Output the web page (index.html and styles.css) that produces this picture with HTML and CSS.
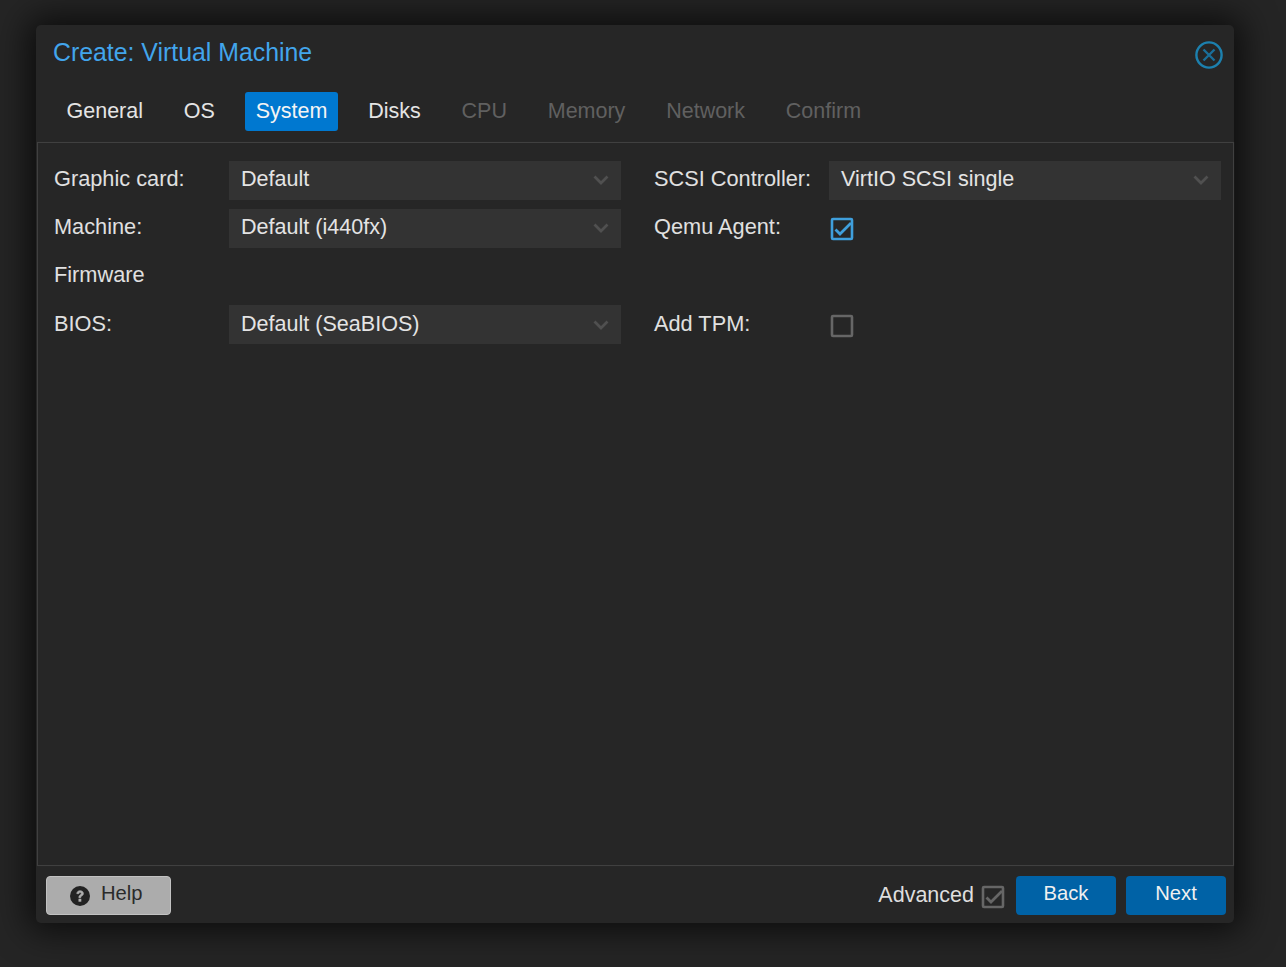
FILE: index.html
```html
<!DOCTYPE html>
<html lang="en">
<head>
<meta charset="utf-8">
<title>Create: Virtual Machine</title>
<link rel="stylesheet" href="styles.css">
</head>
<body>
<div class="window">
  <div class="title-row">
    <div class="title">Create: Virtual Machine</div>
    <svg class="close" viewBox="0 0 28 28" width="28" height="28"><circle cx="14" cy="14" r="12.6" fill="none" stroke="#1c80ae" stroke-width="2.400"/><path d="M8.500 8.500 19.500 19.500M19.500 8.500 8.500 19.500" stroke="#1a6f9a" stroke-width="2.400" fill="none"/></svg>
  </div>
  <div class="tabs">
    <div class="tab">General</div>
    <div class="tab">OS</div>
    <div class="tab active">System</div>
    <div class="tab">Disks</div>
    <div class="tab off">CPU</div>
    <div class="tab off">Memory</div>
    <div class="tab off">Network</div>
    <div class="tab off">Confirm</div>
  </div>
  <div class="body">
    <div class="form">
      <div class="col">
        <div class="row"><label class="lbl">Graphic card:</label><div class="select"><span>Default</span><svg class="chev" viewBox="0 0 16 10" width="16" height="10"><path d="M1.500 1.500 8 8l6.500-6.500" fill="none" stroke="#505050" stroke-width="2.800"/></svg></div></div>
        <div class="row"><label class="lbl">Machine:</label><div class="select"><span>Default (i440fx)</span><svg class="chev" viewBox="0 0 16 10" width="16" height="10"><path d="M1.500 1.500 8 8l6.500-6.500" fill="none" stroke="#505050" stroke-width="2.800"/></svg></div></div>
        <div class="row"><label class="lbl">Firmware</label></div>
        <div class="row"><label class="lbl">BIOS:</label><div class="select"><span>Default (SeaBIOS)</span><svg class="chev" viewBox="0 0 16 10" width="16" height="10"><path d="M1.500 1.500 8 8l6.500-6.500" fill="none" stroke="#505050" stroke-width="2.800"/></svg></div></div>
      </div>
      <div class="col">
        <div class="row"><label class="lbl">SCSI Controller:</label><div class="select"><span>VirtIO SCSI single</span><svg class="chev" viewBox="0 0 16 10" width="16" height="10"><path d="M1.500 1.500 8 8l6.500-6.500" fill="none" stroke="#505050" stroke-width="2.800"/></svg></div></div>
        <div class="row"><label class="lbl">Qemu Agent:</label><svg class="check" viewBox="0 0 24 24" width="24" height="24"><rect x="2" y="2" width="20" height="20" rx="1" fill="none" stroke="#3f9fdc" stroke-width="2.600"/><path d="M5.500 12.500 10 17 21 6" fill="none" stroke="#3f9fdc" stroke-width="2.800"/></svg></div>
        <div class="row"></div>
        <div class="row"><label class="lbl">Add TPM:</label><svg class="check" viewBox="0 0 24 24" width="24" height="24"><rect x="2" y="2" width="20" height="20" rx="1" fill="none" stroke="#666" stroke-width="2.600"/></svg></div>
      </div>
    </div>
  </div>
  <div class="footer">
    <button class="btn help"><svg viewBox="0 0 20 20" width="20" height="20"><circle cx="10" cy="10" r="10" fill="#222"/><path d="M6.800 7.600C6.900 5.700 8.300 4.700 10.100 4.700c1.900 0 3.300 1.100 3.300 2.800 0 1.300-.8 2-1.700 2.600-.8.500-1 .8-1 1.600H8.900c-.1-1.300.3-2 1.300-2.700.7-.5 1.100-.9 1.100-1.400 0-.7-.5-1.100-1.200-1.100-.8 0-1.300.5-1.400 1.200z" fill="#aeaeae" stroke="#aeaeae" stroke-width=".7"/><rect x="8.500" y="12.800" width="2.800" height="2.900" fill="#aeaeae"/></svg><span>Help</span></button>
    <div class="spacer"></div>
    <span class="adv">Advanced</span>
    <svg class="adv-check" viewBox="0 0 24 24" width="24" height="24"><rect x="2" y="2" width="20" height="20" rx="1" fill="none" stroke="#666" stroke-width="2.600"/><path d="M5.500 12.500 10 17 21 6" fill="none" stroke="#666" stroke-width="2.800"/></svg>
    <button class="btn primary">Back</button>
    <button class="btn primary">Next</button>
  </div>
</div>
</body>
</html>
```
FILE: styles.css
```css
* { box-sizing: border-box; }
html, body { margin: 0; height: 100%; }
body {
  background: #252525;
  font-family: "Liberation Sans", Arial, sans-serif;
  color: #e4e4e4;
  padding: 25px 52px 44px 36px;
  overflow: hidden;
}
.window {
  height: 898px;
  width: 1198px;
  background: #262626;
  border-radius: 5px;
  box-shadow: 0 0 34px 8px rgba(0,0,0,.68);
  display: flex;
  flex-direction: column;
  padding: 0 0 0 1px;
}
.title-row {
  height: 51px;
  display: flex;
  align-items: flex-start;
  justify-content: space-between;
  padding: 13px 11px 0 16px;
}
.title { font-size: 24.850px; line-height: 29px; color: #42a5ec; }
.close { margin-top: 3px; }
.tabs {
  height: 66px;
  padding: 16px 0 0 18.500px;
  display: flex;
  gap: 18.800px;
  align-items: flex-start;
  font-size: 21.500px;
}
.tab {
  height: 39px;
  line-height: 38px;
  padding: 0 11px;
  border-radius: 3px;
}
.tab.active { background: #0078d0; color: #f4f4f4; }
.tab.off { color: #606060; }
.body {
  flex: 1;
  border: 1px solid #404040;
  box-shadow: 0 0 1px #333;
  padding: 17px 12px 0 16px;
}
.form { display: flex; gap: 33px; }
.col { flex: 1; display: flex; flex-direction: column; gap: 8.200px; }
.row { height: 40px; display: flex; align-items: center; font-size: 21.550px; }
.lbl { width: 175px; flex: none; color: #e0e0e0; margin-bottom: 2px; font-size: 21.750px; }
.select {
  flex: 1;
  height: 39px;
  background: #333;
  padding: 0 12px;
  display: flex;
  align-items: center;
  justify-content: space-between;
  color: #e4e4e4;
}
.select span { margin-bottom: 2px; }
.chev { margin-top: 0; }
.check { margin: 2px 0 0 1px; }
.footer {
  height: 57px;
  display: flex;
  align-items: center;
  padding: 1px 8px 0 9px;
  font-size: 21.500px;
}
.spacer { flex: 1; }
.btn {
  height: 39px;
  border-radius: 4px;
  font: inherit;
  font-size: 20.200px;
  border: 1px solid transparent;
  padding: 0 0 3px;
}
.help {
  width: 125px;
  background: #acacac;
  border-color: #c2c2c2;
  color: #2a2a2a;
  display: flex;
  align-items: center;
  gap: 11px;
  padding-left: 23px;
}
.help svg { margin-top: 4px; }
.primary { width: 100px; background: #0062a6; color: #f0f0f0; margin-left: 10px; }
.adv { color: #dedede; }
.adv-check { margin: 3px 0 0 7px; }
.adv-check + .primary { margin-left: 11px; }
```
